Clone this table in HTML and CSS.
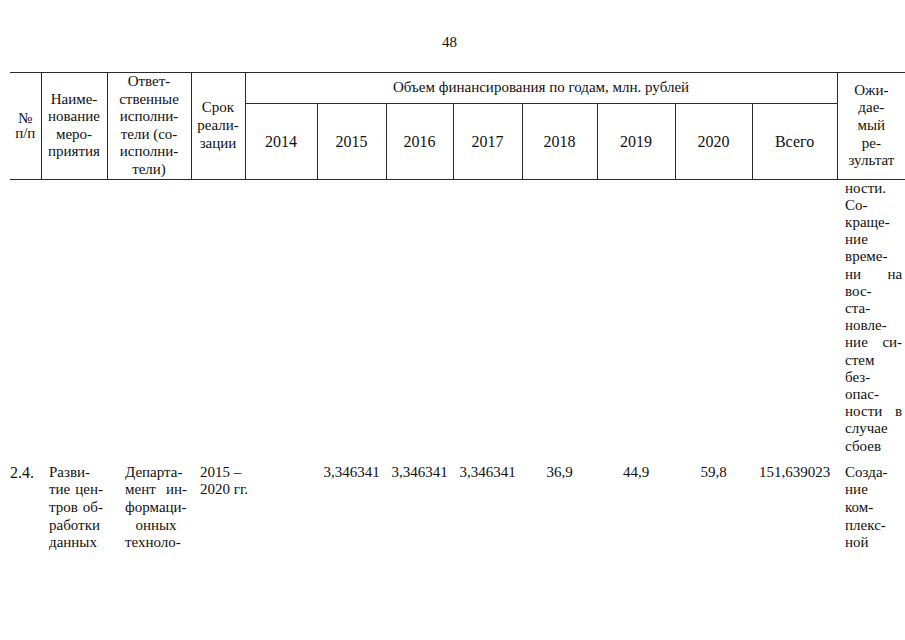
FILE: index.html
```html
<!DOCTYPE html>
<html>
<head>
<meta charset="utf-8">
<title>48</title>
<link rel="stylesheet" href="styles.css">
</head>
<body>
<div class="pnum">48</div>
<table class="plan">
  <colgroup>
    <col class="c-num"><col class="c-name"><col class="c-resp"><col class="c-term">
    <col class="c-y1"><col class="c-y2"><col class="c-y3"><col class="c-y4">
    <col class="c-y5"><col class="c-y6"><col class="c-y7"><col class="c-total"><col class="c-res">
  </colgroup>
  <thead>
    <tr class="h1">
      <th rowspan="2" class="hn first"><span class="ln">№</span><span class="ln">п/п</span></th>
      <th rowspan="2"><span class="ln">Наиме-</span><span class="ln">нование</span><span class="ln">меро-</span><span class="ln">приятия</span></th>
      <th rowspan="2"><span class="ln">Ответ-</span><span class="ln">ственные</span><span class="ln">исполни-</span><span class="ln">тели (со-</span><span class="ln">исполни-</span><span class="ln">тели)</span></th>
      <th rowspan="2"><span class="ln">Срок</span><span class="ln">реали-</span><span class="ln">зации</span></th>
      <th colspan="8" class="span">Объем финансирования по годам, млн. рублей</th>
      <th rowspan="2" class="last"><span class="ln">Ожи-</span><span class="ln">дае-</span><span class="ln">мый</span><span class="ln">ре-</span><span class="ln">зультат</span></th>
    </tr>
    <tr class="h2">
      <th>2014</th><th>2015</th><th>2016</th><th>2017</th><th>2018</th><th>2019</th><th>2020</th><th>Всего</th>
    </tr>
  </thead>
  <tbody>
    <tr class="r-cont">
      <td></td><td></td><td></td><td></td>
      <td></td><td></td><td></td><td></td><td></td><td></td><td></td><td></td>
      <td class="res">
        <span class="ln">ности.</span>
        <span class="ln">Со-</span>
        <span class="ln">краще-</span>
        <span class="ln">ние</span>
        <span class="ln">време-</span>
        <span class="ln j">ни на</span>
        <span class="ln">вос-</span>
        <span class="ln">ста-</span>
        <span class="ln">новле-</span>
        <span class="ln j">ние си-</span>
        <span class="ln">стем</span>
        <span class="ln">без-</span>
        <span class="ln">опас-</span>
        <span class="ln j">ности в</span>
        <span class="ln">случае</span>
        <span class="ln">сбоев</span>
      </td>
    </tr>
    <tr class="r-item">
      <td class="num">2.4.</td>
      <td class="name"><span class="ln">Разви-</span><span class="ln j">тие цен-</span><span class="ln j">тров об-</span><span class="ln">работки</span><span class="ln">данных</span></td>
      <td class="resp"><span class="ln j">Департа-</span><span class="ln j">мент ин-</span><span class="ln j">формаци-</span><span class="ln c">онных</span><span class="ln j">техноло-</span></td>
      <td class="term"><span class="ln">2015 –</span><span class="ln">2020 гг.</span></td>
      <td class="v"></td>
      <td class="v">3,346341</td>
      <td class="v">3,346341</td>
      <td class="v">3,346341</td>
      <td class="v">36,9</td>
      <td class="v">44,9</td>
      <td class="v">59,8</td>
      <td class="v">151,639023</td>
      <td class="res"><span class="ln">Созда-</span><span class="ln">ние</span><span class="ln">ком-</span><span class="ln">плекс-</span><span class="ln">ной</span></td>
    </tr>
  </tbody>
</table>
</body>
</html>
```
FILE: styles.css
```css
html, body {
  margin: 0;
  padding: 0;
  background: #fff;
}
body {
  width: 905px;
  height: 640px;
  overflow: hidden;
  font-family: "Liberation Serif", "Times New Roman", "DejaVu Serif", serif;
  font-size: 15px;
  line-height: 17.6px;
  color: #111;
}
.pnum {
  padding: 33px 6px 0 0;
  height: 72px;
  box-sizing: border-box;
  text-align: center;
  font-size: 15px;
  line-height: 18px;
}
.plan {
  margin-left: 10px;
  border-collapse: collapse;
  table-layout: fixed;
  width: 895px;
}
.plan th, .plan td {
  font-family: "Liberation Serif", "Times New Roman", "DejaVu Serif", serif;
}
.c-num { width: 31px; }
.c-name { width: 66px; }
.c-resp { width: 84px; }
.c-term { width: 54px; }
.c-y1 { width: 72px; }
.c-y2 { width: 69px; }
.c-y3 { width: 67px; }
.c-y4 { width: 69px; }
.c-y5 { width: 75px; }
.c-y6 { width: 78px; }
.c-y7 { width: 77px; }
.c-total { width: 85px; }
.c-res { width: 68px; }

.ln { display: block; }
.j { text-align: justify; text-align-last: justify; }
.c { text-align: center; text-align-last: center; }

thead th {
  font-weight: normal;
  padding: 0;
  text-align: center;
  vertical-align: middle;
  border: 1px solid #2a2a2a;
}
thead th.first { border-left: none; }
thead th.last { border-right: none; }
.h1 th { border-top: 1px solid #2a2a2a; }
.h1 .span { height: 29px; }
.h2 th { height: 71px; font-size: 16px; }
.hn { line-height: 15px; }

tbody td {
  padding: 0;
  vertical-align: top;
  white-space: nowrap;
}
.r-cont td { padding-bottom: 9px; }
.r-cont .res { line-height: 17.2px; }
.res {
  padding-left: 8px !important;
  padding-right: 3px !important;
  white-space: normal;
}
.num { padding-left: 0; font-size: 16px; }
.name { padding: 0 4px 0 8px !important; }
.resp { padding: 0 4px 0 18px !important; }
.term { padding-left: 9px !important; }
.v { text-align: center; }
```
